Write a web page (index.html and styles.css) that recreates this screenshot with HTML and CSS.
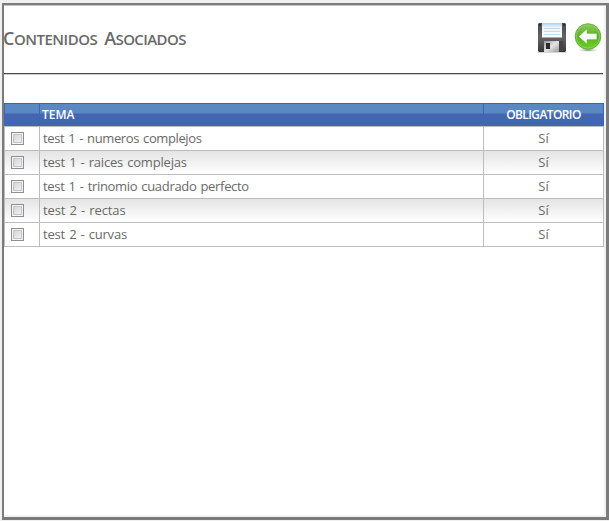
FILE: index.html
```html
<!DOCTYPE html>
<html lang="es">
<head>
<meta charset="utf-8">
<title>Contenidos Asociados</title>
<link rel="stylesheet" href="styles.css">
</head>
<body>
<main class="window">
  <header class="heading">
    <h1><span class="w1">Contenidos</span> <span class="w2">Asociados</span></h1>
    <div class="actions">
      <svg width="30" height="32" viewBox="0 0 30 32" role="img" aria-label="Guardar">
        <defs>
          <linearGradient id="disk" x1="0" y1="0" x2="0" y2="1"><stop offset="0" stop-color="#4b4b4b"/><stop offset=".5" stop-color="#646466"/><stop offset="1" stop-color="#39393b"/></linearGradient>
          <linearGradient id="label" x1="0" y1="0" x2="0" y2="1"><stop offset="0" stop-color="#b0d0eb"/><stop offset=".3" stop-color="#e8f4fe"/><stop offset="1" stop-color="#fff"/></linearGradient>
          <linearGradient id="metal" x1="0" y1="0" x2="1" y2="1"><stop offset="0" stop-color="#999"/><stop offset=".5" stop-color="#e4e4e4"/><stop offset="1" stop-color="#999"/></linearGradient>
        </defs>
        <path d="M1 30h28v1H1z" fill="#aaa" opacity=".5"/>
        <path d="M2 1h26l1 1v27l-1 1H2l-1-1V2z" fill="url(#disk)"/>
        <path d="M5 1h20v14H5z" fill="url(#label)"/>
        <path d="M7 6.5h16M7 9.5h16M7 12.5h16" stroke="#c3dcf1"/>
        <path d="M5 15.5h20" stroke="#aaa"/>
        <path d="M7 19h19v10H7z" fill="#444446"/>
        <path d="M7 19h15v11H7z" fill="url(#metal)"/>
        <path d="M9 21h4v6H9z" fill="#2b2b2d"/>
        <path d="M2 2h2v2H2zM26 2h2v2h-2z" fill="#333"/>
      </svg>
      <svg width="28" height="32" viewBox="0 0 28 32" role="img" aria-label="Volver">
        <defs>
          <linearGradient id="green" x1="0" y1="0" x2="0" y2="1"><stop offset="0" stop-color="#8fcd5d"/><stop offset=".48" stop-color="#5eb028"/><stop offset="1" stop-color="#65d51b"/></linearGradient>
          <radialGradient id="shadow"><stop offset="0" stop-color="#777"/><stop offset="1" stop-color="#fff" stop-opacity="0"/></radialGradient>
        </defs>
        <ellipse cx="14" cy="28" rx="12" ry="2.5" fill="url(#shadow)"/>
        <circle cx="14" cy="14.5" r="12.8" fill="url(#green)" stroke="#55a629" stroke-width=".8"/>
        <circle cx="14" cy="14.5" r="11.6" fill="none" stroke="#8cce5d" stroke-width="1"/>
        <path d="M4.5 14.5l8.7-8v4.7H23v6.6h-9.8v4.7z" fill="#f6f8f3" stroke="#5ba631" stroke-width=".7"/>
      </svg>
    </div>
  </header>
  <table class="topics">
    <colgroup><col class="pick"><col class="topic"><col class="required"></colgroup>
    <thead><tr><th></th><th>TEMA</th><th><span class="obligatorio">OBLIGATORIO</span></th></tr></thead>
    <tbody>
      <tr><td><input type="checkbox"></td><td><span class="t1">test 1 - numeros complejos</span></td><td>Sí</td></tr>
      <tr><td><input type="checkbox"></td><td><span class="t2">test 1 - raices complejas</span></td><td>Sí</td></tr>
      <tr><td><input type="checkbox"></td><td><span class="t3">test 1 - trinomio cuadrado perfecto</span></td><td>Sí</td></tr>
      <tr><td><input type="checkbox"></td><td><span class="t4">test 2 - rectas</span></td><td>Sí</td></tr>
      <tr><td><input type="checkbox"></td><td><span class="t5">test 2 - curvas</span></td><td>Sí</td></tr>
    </tbody>
  </table>
</main>
</body>
</html>
```
FILE: styles.css
```css
* { box-sizing: border-box; }
html { background: #f0f0f0; }
body { margin: 0; height: 521px; padding: 3px 0 1px 2px; overflow: hidden; font-family: "Open Sans", "Noto Sans", sans-serif; color: #696969; }
.window { height: 517px; border: solid #7b7b7b; border-width: 2px 3px 3px 2px; background: #fff; box-shadow: inset 0 1px #c8c8c8, inset -2px -2px #f1f1f1; padding-right: 2px; }
.heading { height: 69px; width: 599px; border-bottom: 1px solid #484848; box-shadow: 0 1px #d0d0d0; display: flex; justify-content: space-between; }
h1 { display: flex; gap: 7px; margin: 20px 0 0 -1px; font-size: 15px; line-height: 27px; font-weight: 600; white-space: nowrap; }
h1 span { display: block; text-transform: uppercase; }
h1 span::first-letter { font-size: 18px; }
.w1 { letter-spacing: -.5px; }
.w2 { letter-spacing: -.6px; }
.actions { display: flex; gap: 7px; padding: 17px 1px 0 0; }
.topics { width: 600px; margin-top: 29px; table-layout: fixed; border-collapse: separate; border-spacing: 0; font-size: 13px; }
.pick { width: 36px; }
.topic { width: 444px; }
.required { width: 120px; }
th { height: 23px; padding: 0 2px; color: #fff; font-size: 12px; line-height: 20px; font-weight: 600; text-align: left; background: linear-gradient(#5a88c3 0 9px, #4465b2 10px); border-top: 1px solid #3d63ba; border-right: 1px solid #3d66ae; }
th:first-child, td:first-child { border-left: 1px solid #bdbdbd; }
th:first-child { border-left-color: #3d66ae; }
th:last-child, td:last-child { text-align: center; }
.obligatorio { letter-spacing: -.6px; }
td { height: 24px; padding: 0 3px 1px; line-height: 22px; border-top: 1px solid #bdbdbd; border-right: 1px solid #bdbdbd; white-space: nowrap; }
.t1, .t2, .t3, .t4, .t5 { word-spacing: 1px; }
.t1 { letter-spacing: -.38px; }
.t2 { letter-spacing: -.2px; }
.t3 { letter-spacing: -.32px; }
.t4 { letter-spacing: -.13px; }
.t5 { letter-spacing: -.2px; }
tbody tr:last-child td { height: 25px; border-bottom: 1px solid #bdbdbd; }
tbody tr:nth-child(even) td { background: linear-gradient(#e4e4e4, #fff); }
td:first-child { padding: 0 0 0 6px; }
input { appearance: none; display: block; width: 13px; height: 13px; margin: 0; border: 1px solid #8e8f8f; background: linear-gradient(135deg, #cbcfd5, #f6f6f6) padding-box; box-shadow: inset 0 0 0 1px #f4f4f4, inset 0 0 0 2px #c3c6cb; }
```
